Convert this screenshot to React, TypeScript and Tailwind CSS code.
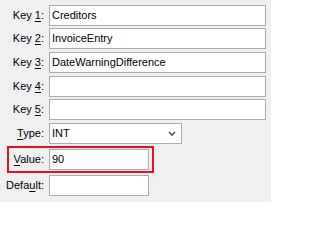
import React from "react";

const font = { fontFamily: '"Liberation Sans", Arial, sans-serif' };

function Label({ pre, k, post }: { pre: string; k: string; post: string }) {
  return (
    <span className="w-[44px] shrink-0 text-right text-[11px] leading-none text-black">
      {pre}
      <span className="underline underline-offset-[2px]">{k}</span>
      {post}
    </span>
  );
}

function Box({ value, w }: { value?: string; w: string }) {
  return (
    <div className={`${w} ml-[5px] flex h-[21px] items-center border border-[#acacac] bg-white px-[2px] text-[11px] text-black`}>
      {value}
    </div>
  );
}

export default function App() {
  const keys = [
    { k: "1", v: "Creditors", mt: "mt-[5px]" },
    { k: "2", v: "InvoiceEntry", mt: "mt-[2px]" },
    { k: "3", v: "DateWarningDifference", mt: "mt-[3px]" },
    { k: "4", v: "", mt: "mt-[3px]" },
    { k: "5", v: "", mt: "mt-[2px]" },
  ];
  return (
    <div className="h-[202px] w-[271px] overflow-hidden bg-[#f0f0f0]" style={font}>
      <div className="flex flex-col">
        {keys.map((r) => (
          <div key={r.k} className={`${r.mt} flex items-center`}>
            <Label pre="Key " k={r.k} post=":" />
            <Box value={r.v} w="w-[217px]" />
          </div>
        ))}
        <div className="mt-[3px] flex items-center">
          <Label pre="" k="T" post="ype:" />
          <div className="ml-[5px] flex h-[21px] w-[133px] items-center justify-between border border-[#acacac] bg-white pl-[2px] pr-[5px] text-[11px] text-black">
            <span>INT</span>
            <svg width="8" height="6" viewBox="0 0 8 6">
              <path d="M1 1 L4 4 L7 1" stroke="#555" strokeWidth="1.6" fill="none" />
            </svg>
          </div>
        </div>
        <div className="ml-[7px] mt-[2px] flex h-[27px] w-[147px] items-center border-2 border-[#e81123]">
          <span className="w-[35px] shrink-0 text-right text-[11px] leading-none text-black">
            <span className="underline underline-offset-[2px]">V</span>alue:
          </span>
          <Box value="90" w="w-[100px]" />
        </div>
        <div className="mt-[2px] flex items-center">
          <Label pre="Defa" k="u" post="lt:" />
          <Box w="w-[100px]" />
        </div>
      </div>
    </div>
  );
}
